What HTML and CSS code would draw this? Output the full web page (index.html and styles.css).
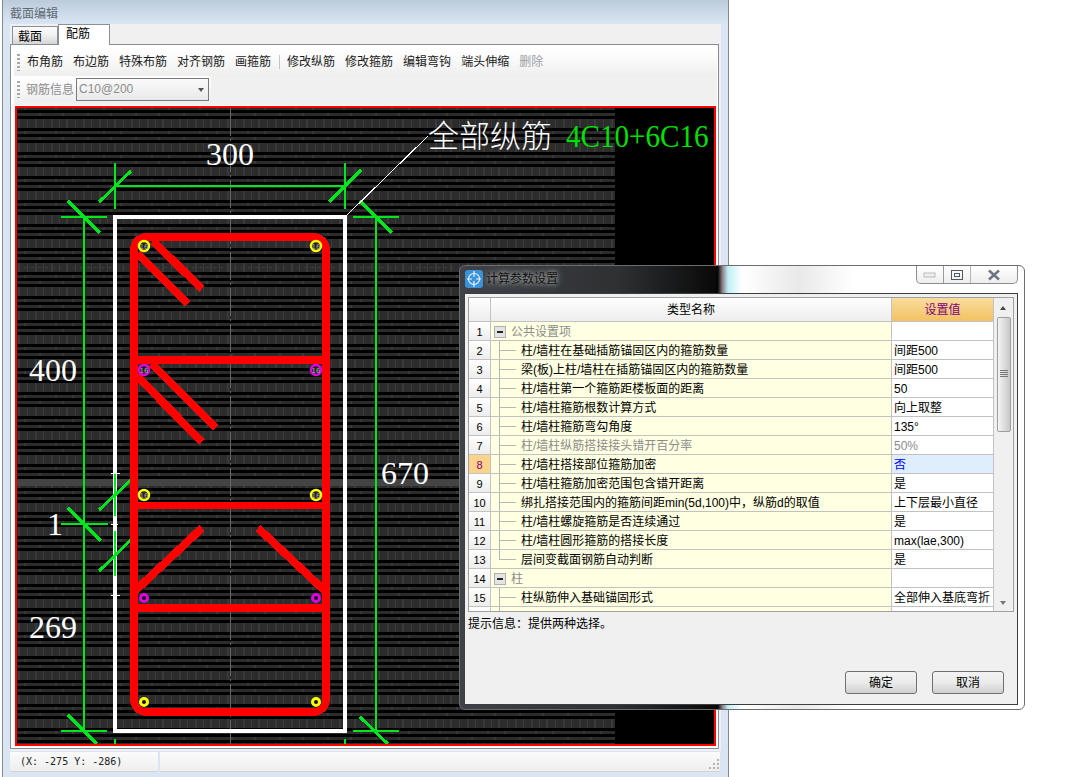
FILE: index.html
```html
<!DOCTYPE html>
<html lang="zh">
<head>
<meta charset="utf-8">
<title>截面编辑</title>
<link rel="stylesheet" href="styles.css">
</head>
<body>
<div class="window">
  <div class="win-title">截面编辑</div>
  <div class="main">
    <div class="tabs">
      <div class="tab">截面</div>
      <div class="tab tab-active">配筋</div>
    </div>
    <div class="panel">
      <div class="tools">
        <div class="toolbar">
          <span class="grip"></span>
          <span class="tool">布角筋</span>
          <span class="tool">布边筋</span>
          <span class="tool">特殊布筋</span>
          <span class="tool">对齐钢筋</span>
          <span class="tool">画箍筋</span>
          <span class="tool-sep"></span>
          <span class="tool">修改纵筋</span>
          <span class="tool">修改箍筋</span>
          <span class="tool">编辑弯钩</span>
          <span class="tool">端头伸缩</span>
          <span class="tool tool-off">删除</span>
        </div>
        <div class="toolbar2">
          <span class="grip"></span>
          <span class="info-label">钢筋信息</span>
          <div class="combo"><span>C10@200</span><i class="combo-arrow"></i></div>
        </div>
      </div>
      <div class="canvas">
        <svg class="drawing" viewBox="17 107 697 636" width="697" height="636" xmlns="http://www.w3.org/2000/svg">
          <defs>
            <pattern id="bands" x="0" y="118" width="48" height="24" patternUnits="userSpaceOnUse">
              <rect class="band" x="0" y="0" width="48" height="9"/>
              <rect class="band" x="0" y="12" width="48" height="3"/>
              <rect class="band" x="0" y="18" width="48" height="3"/>
              <rect class="tex" x="3" y="0" width="2" height="9"/>
              <rect class="tex" x="11" y="0" width="1" height="9"/>
              <rect class="tex" x="18" y="0" width="2" height="9"/>
              <rect class="tex" x="27" y="0" width="1" height="9"/>
              <rect class="tex" x="35" y="0" width="2" height="9"/>
              <rect class="tex" x="43" y="0" width="1" height="9"/>
              <rect class="tex" x="7" y="12" width="2" height="3"/>
              <rect class="tex" x="24" y="12" width="2" height="3"/>
              <rect class="tex" x="39" y="18" width="2" height="3"/>
              <rect class="tex" x="14" y="18" width="2" height="3"/>
            </pattern>
          </defs>
          <rect class="bg" x="17" y="107" width="697" height="636"/>
          <rect class="bg-bands" x="17" y="107" width="598" height="636"/>
          <rect class="fuzz" x="17" y="478" width="598" height="7"/>
          <path class="axis" d="M230.5 107V743"/>
          <path class="axis-h" d="M17 266.5H615"/>

          <!-- dimension lines -->
          <path class="dim" d="M115 185H345M115 162V208M345 162V208"/>
          <path class="dim" d="M84 216V730M61 216H107M61 730H107M61 523H108"/>
          <path class="dim" d="M376 216V730M353 216H399M353 730H399"/>
          <path class="dim" d="M115 738V743M345 738V743"/>
          <path class="dim-diag" d="M99 201L131 170M329 201L361 169M68 200L100 232M68 714L97 743M68 507L101 540M360 200L392 232M360 716L388 743"/>

          <!-- section outline -->
          <rect class="outline" x="115" y="216" width="230" height="514"/>
          <path class="dim dim-over" d="M115 473V515M115 530V575"/>
          <path class="dim-diag" d="M99 509L132 478M99 570L132 538"/>
          <path class="tick" d="M111 472H120M111 594H120M111 523H118"/>
          <path class="leader" d="M345 216L428 135"/>

          <!-- stirrups -->
          <rect class="rebar" x="134" y="236" width="192" height="475" rx="12"/>
          <path class="rebar" d="M138 359H322M138 504.5H322M138 607H322"/>
          <path class="rebar rebar-diag" d="M153 240L202 288M138 253L188 303M152 363L216 427M137 375L202 441M202 527L135 590M258 527L325 590"/>

          <!-- bars -->
          <g class="bar bar-y"><circle cx="144" cy="245" r="5"/><circle cx="316" cy="245" r="5"/><circle cx="144" cy="494" r="5"/><circle cx="316" cy="494" r="5"/></g>
          <g class="bar bar-m"><circle cx="144" cy="369" r="5"/><circle cx="316" cy="369" r="5"/></g>
          <g class="bar bar-m bar-thin"><circle cx="144" cy="597" r="3.5"/><circle cx="316" cy="597" r="3.5"/></g>
          <g class="bar bar-y bar-thin"><circle cx="144" cy="701" r="3.5"/><circle cx="316" cy="701" r="3.5"/></g>
          <g class="bar-text">
            <text x="144" y="247.5">16</text><text x="316" y="247.5">16</text>
            <text x="144" y="371.5">16</text><text x="316" y="371.5">16</text>
            <text x="144" y="496.5">16</text><text x="316" y="496.5">16</text>
          </g>

          <!-- labels -->
          <g class="num">
            <text x="230" y="164">300</text>
            <text x="53" y="380">400</text>
            <text x="405" y="483">670</text>
            <text x="55" y="534">1</text>
            <text x="53" y="637">269</text>
          </g>
          <text class="label-cn" x="428" y="146">全部纵筋</text>
          <text class="label-green" transform="translate(566 146) scale(.91 1)">4C10+6C16</text>
        </svg>
      </div>
    </div>
  </div>
  <div class="status">
    <div class="status-cell status-pos">(X: -275 Y: -286)</div>
    <div class="status-cell status-rest">
      <svg class="size-grip" width="12" height="12" viewBox="0 0 12 12" xmlns="http://www.w3.org/2000/svg"><path d="M9 1h2v2H9zM5 5h2v2H5zM9 5h2v2H9zM1 9h2v2H1zM5 9h2v2H5zM9 9h2v2H9z"/></svg>
    </div>
  </div>
</div>

<div class="dialog">
  <div class="dlg-title">
    <svg class="dlg-icon" width="18" height="18" viewBox="0 0 18 18" xmlns="http://www.w3.org/2000/svg">
      <rect class="ico-bg" x="0" y="0" width="18" height="18" rx="3"/>
      <circle class="ico-line" cx="9" cy="9" r="5.5"/>
      <path class="ico-line" d="M9 1V7M9 11V17M2 9H7M11 9H16"/>
    </svg>
    <span class="dlg-name">计算参数设置</span>
    <div class="caption">
      <span class="cap-btn cap-min"><svg width="14" height="8" viewBox="0 0 14 8" xmlns="http://www.w3.org/2000/svg"><rect class="cap-min-ico" x="1" y="2" width="11" height="4"/></svg></span>
      <span class="cap-btn cap-max"><svg width="14" height="12" viewBox="0 0 14 12" xmlns="http://www.w3.org/2000/svg"><rect class="cap-ico" x="1.5" y="1.5" width="11" height="9"/><rect class="cap-ico" x="4.5" y="4.5" width="5" height="3"/></svg></span>
      <span class="cap-btn cap-close"><svg width="14" height="12" viewBox="0 0 14 12" xmlns="http://www.w3.org/2000/svg"><path class="cap-x" d="M2 1.5L12 10.5M12 1.5L2 10.5"/></svg></span>
    </div>
  </div>
  <div class="client">
    <div class="grid">
      <div class="table">
        <div class="row head">
          <div class="c-num"></div>
          <div class="c-name">类型名称</div>
          <div class="c-val">设置值</div>
        </div>
        <div class="row muted"><div class="c-num">1</div><div class="c-name group"><i class="box"></i>公共设置项</div><div class="c-val"></div></div>
        <div class="row"><div class="c-num">2</div><div class="c-name leaf">柱/墙柱在基础插筋锚固区内的箍筋数量</div><div class="c-val">间距500</div></div>
        <div class="row"><div class="c-num">3</div><div class="c-name leaf">梁(板)上柱/墙柱在插筋锚固区内的箍筋数量</div><div class="c-val">间距500</div></div>
        <div class="row"><div class="c-num">4</div><div class="c-name leaf">柱/墙柱第一个箍筋距楼板面的距离</div><div class="c-val">50</div></div>
        <div class="row"><div class="c-num">5</div><div class="c-name leaf">柱/墙柱箍筋根数计算方式</div><div class="c-val">向上取整</div></div>
        <div class="row"><div class="c-num">6</div><div class="c-name leaf">柱/墙柱箍筋弯勾角度</div><div class="c-val">135°</div></div>
        <div class="row muted"><div class="c-num">7</div><div class="c-name leaf">柱/墙柱纵筋搭接接头错开百分率</div><div class="c-val">50%</div></div>
        <div class="row selected"><div class="c-num">8</div><div class="c-name leaf">柱/墙柱搭接部位箍筋加密</div><div class="c-val">否</div></div>
        <div class="row"><div class="c-num">9</div><div class="c-name leaf">柱/墙柱箍筋加密范围包含错开距离</div><div class="c-val">是</div></div>
        <div class="row"><div class="c-num">10</div><div class="c-name leaf">绑扎搭接范围内的箍筋间距min(5d,100)中，纵筋d的取值</div><div class="c-val">上下层最小直径</div></div>
        <div class="row"><div class="c-num">11</div><div class="c-name leaf">柱/墙柱螺旋箍筋是否连续通过</div><div class="c-val">是</div></div>
        <div class="row"><div class="c-num">12</div><div class="c-name leaf">柱/墙柱圆形箍筋的搭接长度</div><div class="c-val">max(lae,300)</div></div>
        <div class="row"><div class="c-num">13</div><div class="c-name leaf leaf-last">层间变截面钢筋自动判断</div><div class="c-val">是</div></div>
        <div class="row muted"><div class="c-num">14</div><div class="c-name group"><i class="box"></i>柱</div><div class="c-val"></div></div>
        <div class="row"><div class="c-num">15</div><div class="c-name leaf">柱纵筋伸入基础锚固形式</div><div class="c-val">全部伸入基底弯折</div></div>
        <div class="row"><div class="c-num"></div><div class="c-name leaf"></div><div class="c-val"></div></div>
      </div>
      <div class="scrollbar">
        <i class="arrow arrow-up"></i>
        <div class="thumb"><span class="thumb-grip"></span></div>
        <i class="arrow arrow-down"></i>
      </div>
    </div>
    <div class="hint">提示信息：提供两种选择。</div>
    <div class="actions">
      <button class="btn">确定</button>
      <button class="btn">取消</button>
    </div>
  </div>
</div>
</body>
</html>
```
FILE: styles.css
```css
* { box-sizing: border-box; }
html, body { margin: 0; padding: 0; }
body {
  position: relative;
  width: 1081px;
  height: 777px;
  overflow: hidden;
  background: #fff;
  font: 12px/18px "Liberation Sans", "Noto Sans CJK SC", sans-serif;
  color: #000;
}

/* editor window */
.window {
  display: flex;
  flex-direction: column;
  width: 727px;
  height: 777px;
  margin-left: 2px;
  border-left: 1px solid #85888c;
  border-right: 1px solid #85888c;
  background: #d9e5f3;
}
.win-title {
  height: 24px;
  padding: 5px 0 0 7px;
  color: #5f6a76;
  background: linear-gradient(#bccbdb, #d9e5f3);
}
.main {
  display: flex;
  flex-direction: column;
  height: 727px;
  margin: 0 7px;
  padding-right: 2px;
  background: #f0f0f0;
}
.tabs {
  display: flex;
  align-items: flex-end;
  height: 20px;
  padding-left: 2px;
}
.tab {
  width: 46px;
  height: 18px;
  padding-left: 5px;
  line-height: 20px;
  border: 1px solid #8a9097;
  border-bottom: 0;
  background: linear-gradient(#fcfcfc, #f0f0f0 50%, #d4d4d4);
}
.tab-active {
  position: relative;
  width: 52px;
  height: 21px;
  margin-bottom: -1px;
  padding-left: 7px;
  line-height: 18px;
  background: #fff;
  z-index: 1;
}
.panel {
  width: 709px;
  height: 705px;
  padding: 3px 2px 3px 4px;
  border: 1px solid #878c92;
  background: #fff;
}
.tools { background: #f0f0f0; margin-left: -1px; margin-right: -1px; height: 57px; }
.toolbar {
  display: flex;
  align-items: center;
  gap: 10px;
  height: 28px;
  padding-left: 3px;
  background: linear-gradient(#fff, #fafafa 40%, #eee);
}
.toolbar .grip { margin-right: -3px; }
.grip {
  width: 3px;
  height: 17px;
  background: repeating-linear-gradient(#a8a8a8 0 2px, transparent 2px 4px);
}
.tool { color: #1a1a1a; }
.tool-off { color: #9aa0a8; }
.tool-sep { width: 1px; height: 14px; margin: 0 -3px 0 -2px; background: #c4c4c4; }
.toolbar2 {
  display: flex;
  align-items: center;
  width: 197px;
  height: 27px;
  padding-left: 3px;
  background: linear-gradient(#fff, #eee);
}
.info-label { margin-left: 6px; color: #8c8c8c; }
.combo {
  position: relative;
  width: 133px;
  height: 23px;
  margin-left: 2px;
  padding-left: 2px;
  line-height: 20px;
  color: #8c8c8c;
  border: 1px solid #7a7a7a;
  background: linear-gradient(#fafafa, #e9e9e9);
}
.combo-arrow {
  position: absolute;
  right: 4px;
  top: 9px;
  border: 3px solid transparent;
  border-top: 4px solid #555;
  border-bottom: 0;
}
.canvas {
  width: 701px;
  height: 640px;
  margin-top: 1px;
  border: 2px solid #f00;
  background: #000;
}
.drawing { display: block; }

/* drawing */
.bg { fill: #000; }
.bg-bands { fill: url(#bands); }
.band { fill: #2c2c2c; }
.tex { fill: #3a3a3a; }
.fuzz { fill: #444; }
.axis { stroke: #666; stroke-width: 1; stroke-dasharray: 28 3 2 3; fill: none; }
.axis-h { stroke: #3c3c3c; stroke-width: 1; stroke-dasharray: 3 4; fill: none; }
.dim { stroke: #00e61e; stroke-width: 2; fill: none; shape-rendering: crispEdges; }
.dim-diag { stroke: #00e61e; stroke-width: 3; fill: none; shape-rendering: crispEdges; }
.outline { fill: none; stroke: #fff; stroke-width: 4; shape-rendering: crispEdges; }
.tick { stroke: #fff; stroke-width: 1; fill: none; shape-rendering: crispEdges; }
.leader { stroke: #fff; stroke-width: 1; fill: none; shape-rendering: crispEdges; }
.rebar { fill: none; stroke: #f00; stroke-width: 7.5; shape-rendering: crispEdges; }
.rebar-diag { stroke-width: 8; }
.bar circle { fill: #222; stroke-width: 2.5; }
.bar-y circle { stroke: #ff0; }
.bar-m circle { stroke: #e000e0; }
.bar-thin circle { stroke-width: 3; fill: #111; }
.bar-text text { font: 7px "DejaVu Sans", sans-serif; fill: #aaa; text-anchor: middle; }
.num text { font: 32px "Liberation Serif", serif; fill: #fff; text-anchor: middle; }
.label-cn { font: 31px "Noto Sans CJK SC", sans-serif; font-weight: 300; fill: #fff; }
.label-green { font: 32px "Liberation Serif", serif; fill: #00e000; }

/* status */
.status {
  display: flex;
  gap: 2px;
  height: 20px;
  margin: 1px 7px 0;
  width: 710px;
}
.status-cell {
  position: relative;
  border-bottom: 1px solid #d4d4d4;
  background: linear-gradient(#fbfbfb, #eee);
  font: 10px/20px "DejaVu Sans Mono", "Liberation Mono", monospace;
  color: #222;
}
.status-pos { width: 148px; padding-left: 10px; }
.status-rest { flex: 1; }
.size-grip { position: absolute; right: 0; bottom: 1px; fill: #b5b5b5; }

/* dialog */
.dialog {
  position: absolute;
  left: 459px;
  top: 265px;
  width: 566px;
  height: 445px;
  padding: 0 6px 4px 4px;
  border: 1px solid #6d6d6d;
  border-radius: 6px;
  background: linear-gradient(90deg, #3f4347 0, #2e3032 28%, #0a0a0a 45%, #050505 45.7%, #8a7c82 46.5%, #bfeef5 47.5%, #fff 50%, #e9e9e9 60%, #fff 70%, #fff 100%);
}
.dlg-title {
  display: flex;
  align-items: center;
  height: 25px;
  margin-bottom: 2px;
  padding-left: 1px;
}
.dlg-icon { margin-right: 3px; }
.ico-bg { fill: #3a92d8; }
.ico-line { fill: none; stroke: #e8f4ff; stroke-width: 1.2; }
.dlg-name {
  color: #111;
  text-shadow: 0 0 4px rgba(255, 255, 255, .6), 0 0 8px rgba(255, 255, 255, .5);
}
.caption {
  display: flex;
  align-self: flex-start;
  width: 102px;
  height: 18px;
  margin-left: auto;
  border: 1px solid #8d8d8d;
  border-top: 0;
  border-radius: 0 0 5px 5px;
  background: linear-gradient(#fff, #eee);
}
.cap-btn { display: flex; align-items: center; justify-content: center; height: 100%; }
.cap-min { width: 27px; border-right: 1px solid #9a9a9a; }
.cap-max { width: 27px; border-right: 1px solid #b8b8b8; }
.cap-close { flex: 1; }
.cap-min-ico { fill: #eee; stroke: #bbb; stroke-width: 1; }
.cap-ico { fill: none; stroke: #4c5a66; stroke-width: 1; }
.cap-x { stroke: #6c7680; stroke-width: 2.5; fill: none; }
.client {
  display: flex;
  flex-direction: column;
  width: 554px;
  height: 412px;
  padding: 3px 3px 0;
  border: 1px solid #3b3f44;
  background: #f0f0f0;
}
.grid {
  display: flex;
  flex: none;
  width: 546px;
  height: 315px;
  border: 1px solid #a0a0a0;
  background: #f0f0f0;
  overflow: hidden;
}
.table { width: 525px; flex: none; }
.row {
  display: grid;
  grid-template-columns: 22px 401px 102px;
  height: 19px;
  background: #ffffe2;
}
.row > div {
  border-right: 1px solid #c2c2c2;
  border-bottom: 1px solid #c2c2c2;
  line-height: 20px;
  white-space: nowrap;
  overflow: hidden;
}
.c-num {
  text-align: center;
  font-size: 11px;
  background: linear-gradient(#fff, #ededed);
}
.c-name { position: relative; }
.c-val { padding-left: 2px; background: #fff; }
.head { height: 24px; }
.head > div { line-height: 25px; padding: 0; text-align: center; }
.head .c-name { background: linear-gradient(#fff, #ededed); }
.head .c-val { color: #800080; background: linear-gradient(#fadc9e, #f1c262); }
.leaf { padding-left: 30px; }
.leaf::before {
  content: "";
  position: absolute;
  left: 8px;
  top: 0;
  bottom: 0;
  width: 1px;
  background: #b5b5b5;
}
.leaf::after {
  content: "";
  position: absolute;
  left: 8px;
  top: 9px;
  width: 17px;
  height: 1px;
  background: #b5b5b5;
}
.leaf-last::before { bottom: 9px; }
.group { display: flex; align-items: center; gap: 5px; padding: 2px 0 0 3px; }
.box {
  position: relative;
  flex: none;
  width: 12px;
  height: 12px;
  border: 1px solid #b0b0b0;
  background: #e4e4e4;
}
.box::after {
  content: "";
  position: absolute;
  left: 2px;
  top: 4px;
  width: 6px;
  height: 2px;
  background: #222;
}
.muted { color: #8c8c8c; }
.muted .c-num { color: #000; }
.muted .c-val { color: #8c8c8c; }
.selected .c-num { color: #800080; background: #fdd28b; }
.selected .c-val { color: #0000ff; background: #deeefc; }
.scrollbar {
  position: relative;
  flex: 1;
  background: #f0f0f0;
}
.arrow {
  position: absolute;
  left: 6px;
  border: 3.5px solid transparent;
}
.arrow-up { top: 8px; border-top: 0; border-bottom: 4px solid #444; }
.arrow-down { top: 303px; border-bottom: 0; border-top: 4px solid #777; }
.thumb {
  position: absolute;
  left: 3px;
  top: 19px;
  width: 14px;
  height: 115px;
  border: 1px solid #9aa0a6;
  border-radius: 2px;
  background: linear-gradient(90deg, #f4f4f4, #c8c8c8);
}
.thumb-grip {
  position: absolute;
  left: 2px;
  top: 52px;
  width: 8px;
  height: 7px;
  background: repeating-linear-gradient(#777 0 1px, transparent 1px 2px);
}
.hint { margin-top: 3px; height: 18px; line-height: 18px; }
.actions {
  display: flex;
  justify-content: flex-end;
  gap: 15px;
  margin-top: 38px;
  padding-right: 10px;
}
.btn {
  width: 72px;
  height: 23px;
  padding: 0;
  font: inherit;
  color: #000;
  border: 1px solid #707070;
  border-radius: 3px;
  background: linear-gradient(#f3f3f3, #ebebeb 50%, #cfcfcf);
}
```
